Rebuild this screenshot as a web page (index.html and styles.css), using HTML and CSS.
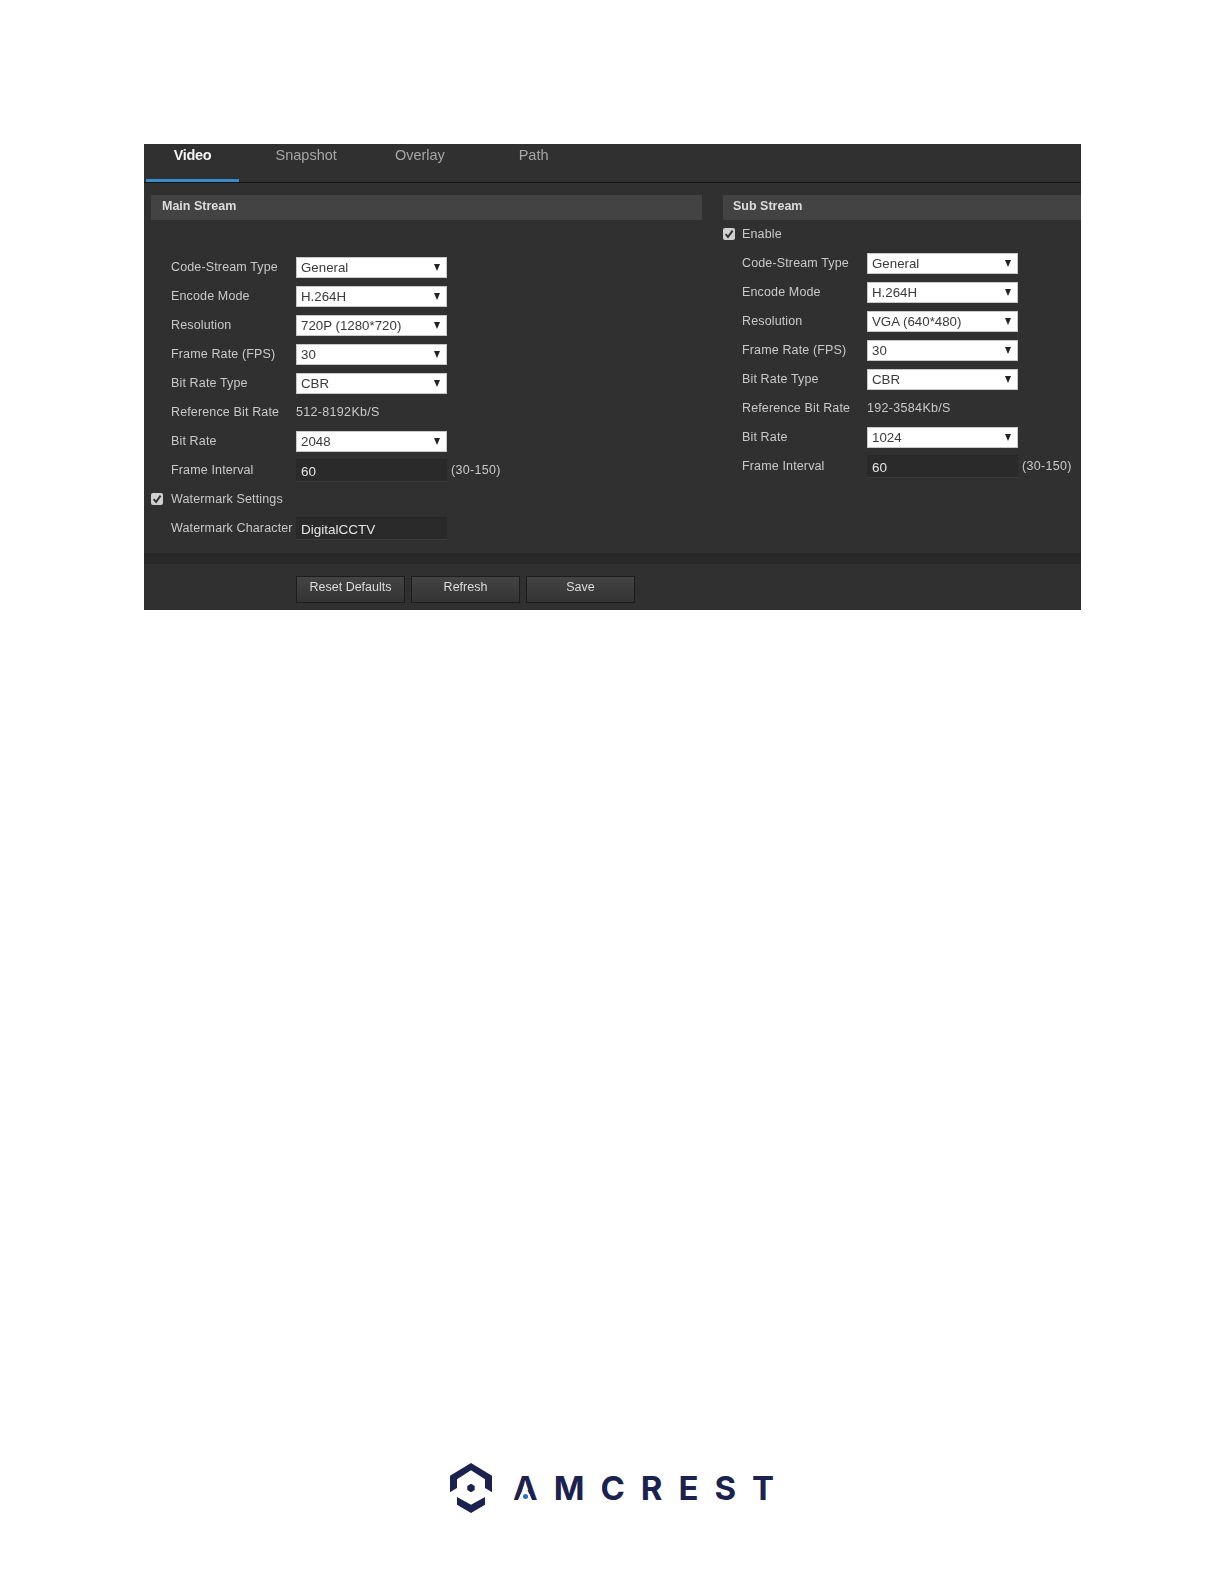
FILE: index.html
```html
<!DOCTYPE html>
<html lang="en">
<head>
<meta charset="utf-8">
<title>Video settings</title>
<link rel="stylesheet" href="styles.css">
</head>
<body>
<main class="panel">
  <nav class="tabs">
    <div class="tab active">Video</div>
    <div class="tab">Snapshot</div>
    <div class="tab">Overlay</div>
    <div class="tab">Path</div>
  </nav>
  <div class="streams">
    <section class="stream main-stream">
      <h2 class="stream-title">Main Stream</h2>
      <div class="form main-form">
        <div class="row"><span class="label">Code-Stream Type</span><div class="select">General</div></div>
        <div class="row"><span class="label">Encode Mode</span><div class="select">H.264H</div></div>
        <div class="row"><span class="label">Resolution</span><div class="select">720P (1280*720)</div></div>
        <div class="row"><span class="label">Frame Rate (FPS)</span><div class="select">30</div></div>
        <div class="row"><span class="label">Bit Rate Type</span><div class="select">CBR</div></div>
        <div class="row"><span class="label">Reference Bit Rate</span><span class="value">512-8192Kb/S</span></div>
        <div class="row"><span class="label">Bit Rate</span><div class="select">2048</div></div>
        <div class="row"><span class="label">Frame Interval</span><div class="input">60</div><span class="hint">(30-150)</span></div>
        <div class="check-row"><span class="check"><svg viewBox="0 0 12 12"><path d="M2.6 6.2 5 9 9.6 2.6" /></svg></span><span class="label">Watermark Settings</span></div>
        <div class="row"><span class="label">Watermark Character</span><div class="input">DigitalCCTV</div></div>
      </div>
    </section>
    <section class="stream sub-stream">
      <h2 class="stream-title">Sub Stream</h2>
      <div class="form">
        <div class="check-row"><span class="check"><svg viewBox="0 0 12 12"><path d="M2.6 6.2 5 9 9.6 2.6" /></svg></span><span class="label">Enable</span></div>
        <div class="row"><span class="label">Code-Stream Type</span><div class="select">General</div></div>
        <div class="row"><span class="label">Encode Mode</span><div class="select">H.264H</div></div>
        <div class="row"><span class="label">Resolution</span><div class="select">VGA (640*480)</div></div>
        <div class="row"><span class="label">Frame Rate (FPS)</span><div class="select">30</div></div>
        <div class="row"><span class="label">Bit Rate Type</span><div class="select">CBR</div></div>
        <div class="row"><span class="label">Reference Bit Rate</span><span class="value">192-3584Kb/S</span></div>
        <div class="row"><span class="label">Bit Rate</span><div class="select">1024</div></div>
        <div class="row"><span class="label">Frame Interval</span><div class="input">60</div><span class="hint">(30-150)</span></div>
      </div>
    </section>
  </div>
  <div class="band"></div>
  <div class="actions">
    <button class="btn">Reset Defaults</button>
    <button class="btn">Refresh</button>
    <button class="btn">Save</button>
  </div>
</main>
<footer class="brand">
  <svg class="brand-mark" viewBox="0 0 42 50" aria-hidden="true">
    <path d="M21 0 42 12.7V29.300L35 25V16.300L21 7.300 7 16.300V25L0 29.300V12.700Z"/>
    <path d="M7 34 21 41.700 35 34V41.700L21 50 7 41.700Z"/>
    <path d="M21 20.700 24.700 22.900V27.100L21 29.300 17.300 27.100V22.900Z"/>
  </svg>
  <div class="wordmark"><span class="a">A</span>MCREST</div>
</footer>
</body>
</html>
```
FILE: styles.css
```css
* { box-sizing: border-box; }
html, body { margin: 0; padding: 0; }
body {
  background: #fff;
  font-family: "Liberation Sans", Arial, sans-serif;
  padding-top: 144px;
}
.panel {
  margin-left: 144px;
  width: 937px;
  height: 466px;
  background: #303030;
  display: flex;
  flex-direction: column;
  color: #c9c9c9;
  font-size: 12.5px;
  filter: blur(0.35px);
}
.tabs {
  height: 39px;
  flex: none;
  display: flex;
  gap: 20.7px;
  padding-left: 2px;
  border-bottom: 1px solid #141414;
}
.tab {
  width: 93px;
  height: 38px;
  padding-top: 3px;
  text-align: center;
  font-size: 14.5px;
  line-height: 17px;
  color: #a6a6a6;
}
.tab.active {
  color: #f2f2f2;
  font-weight: bold;
  letter-spacing: -0.3px;
  border-bottom: 3px solid #3a8ccb;
}
.streams {
  flex: 1;
  display: flex;
  padding: 12px 0 0 7px;
  gap: 21px;
}
.stream { flex: none; }
.main-stream { width: 551px; }
.sub-stream { flex: 1; }
.stream-title {
  margin: 0;
  height: 25px;
  padding-left: 11px;
  font-size: 12.5px;
  line-height: 23px;
  font-weight: bold;
  color: #dcdcdc;
  background: #434343;
}
.sub-stream .stream-title { padding-left: 10px; }
.main-form { padding-top: 33px; }
.row, .check-row {
  height: 29px;
  display: flex;
  align-items: center;
}
.label, .value, .hint {
  padding-bottom: 2px;
  letter-spacing: 0.14px;
}
.value, .hint { letter-spacing: 0.32px; }
.check-row .label { width: auto; }
.check {
  width: 12px;
  height: 12px;
  margin: 0 8px 2px 0;
  background: #d0d0d0;
  border-radius: 2px;
  flex: none;
  display: block;
}
.sub-stream .check { margin-right: 7px; }
.check svg { display: block; width: 12px; height: 12px; fill: none; stroke: #333; stroke-width: 2; }
.row .label { width: 125px; margin-left: 20px; flex: none; }
.sub-stream .row .label { margin-left: 19px; }
.select {
  position: relative;
  width: 151px;
  height: 21px;
  background: #fff;
  border: 1px solid #c8c8c8;
  color: #3a3a3a;
  font-size: 13.3px;
  line-height: 19px;
  padding-left: 4px;
}
.select::after {
  content: "";
  position: absolute;
  right: 6px;
  top: 6px;
  border-left: 3.5px solid transparent;
  border-right: 3.5px solid transparent;
  border-top: 7px solid #222;
}
.input {
  width: 151px;
  height: 23px;
  background: #2a2a2a;
  border-top: 1px solid #262626;
  border-bottom: 1px solid #3c3c3c;
  color: #e4e4e4;
  font-size: 13.5px;
  line-height: 24px;
  padding-left: 5px;
}
.hint { margin-left: 4px; }
.band { height: 11px; flex: none; background: #292929; }
.actions {
  height: 46px;
  flex: none;
  display: flex;
  gap: 6px;
  padding: 12px 0 0 152px;
}
.btn {
  width: 109px;
  height: 27px;
  padding: 0 0 5px;
  border: 1px solid #1c1c1c;
  background: linear-gradient(#444, #333);
  color: #dcdcdc;
  font: 12.5px "Liberation Sans", Arial, sans-serif;
}
.brand {
  margin-top: 853px;
  margin-left: 450px;
  display: flex;
  align-items: center;
  gap: 21px;
  color: #1c2250;
}
.brand-mark { width: 42px; height: 50px; fill: #1c2250; flex: none; display: block; }
.wordmark {
  font-family: Inter, "Liberation Sans", sans-serif;
  font-weight: 700;
  font-size: 33px;
  line-height: 40px;
  letter-spacing: 16px;
}
.a { position: relative; display: inline-block; }
.a::after {
  content: "";
  position: absolute;
  left: 5px;
  bottom: 8px;
  width: 14px;
  height: 13px;
  background: #fff;
  clip-path: polygon(0 100%, 100% 100%, 58% 0, 42% 0);
}
.a::before {
  content: "";
  position: absolute;
  z-index: 1;
  left: 10px;
  bottom: 9px;
  width: 5px;
  height: 5px;
  border-radius: 50%;
  background: #2b6cc4;
}
```
